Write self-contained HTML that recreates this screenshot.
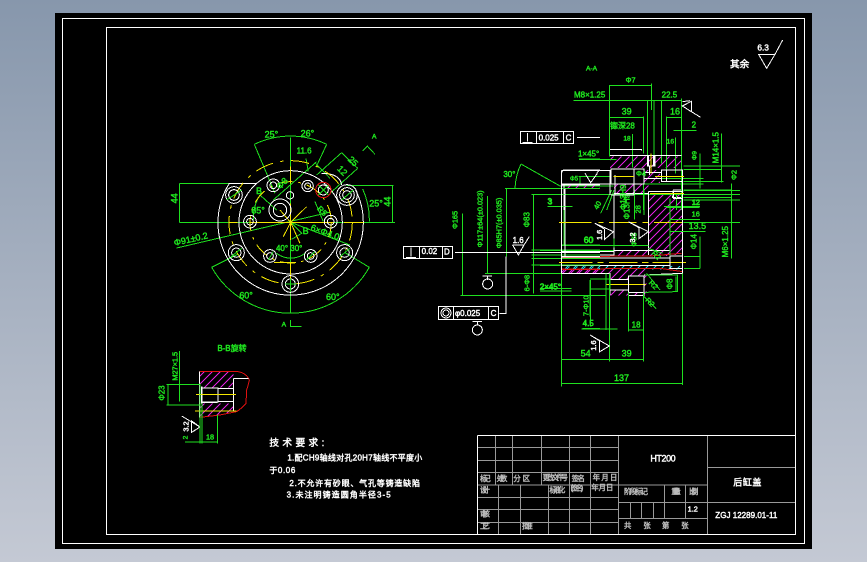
<!DOCTYPE html>
<html><head><meta charset="utf-8"><style>
html,body{margin:0;padding:0;width:867px;height:562px;overflow:hidden;background:linear-gradient(#8797ac,#c4c9d4)}
svg{position:absolute;left:0;top:0;shape-rendering:crispEdges}
text{font-family:"Liberation Sans","WenQuanYi Zen Hei","Noto Sans CJK SC",sans-serif;stroke-width:1.3}
.g{fill:#1fe81f;stroke:#1fe81f;font-size:27px}
.w{fill:#fff;stroke:#fff;font-size:27px}
.a{fill:#bbb;stroke:#bbb;font-size:22px}
.lg{fill:none;stroke:#1fe01f;stroke-width:3}
.lw{fill:none;stroke:#fff;stroke-width:3}
.ly{fill:none;stroke:#f5e800;stroke-width:3}
.lr{fill:none;stroke:#e01010;stroke-width:3}
.la{fill:none;stroke:#999;stroke-width:3}
</style></head><body>
<svg width="867" height="562" viewBox="0 0 867 562">
<defs>
<pattern id="h" width="24" height="24" patternUnits="userSpaceOnUse"><path d="M-6 6L6 -6M0 24L24 0M18 30L30 18" stroke="#e020e0" stroke-width="3"/></pattern>
<pattern id="c" width="24" height="24" patternUnits="userSpaceOnUse"><path d="M0 24L24 0" stroke="#20d0e0" stroke-width="3"/></pattern>
</defs>
<rect x="55" y="13" width="757" height="536" fill="#000"/>
<g fill="none" stroke="#fff"><rect x="62.5" y="18.5" width="742" height="525"/><rect x="106.5" y="27.5" width="689" height="507"/></g>

<!-- roughness top right -->
<g transform="translate(720,30) scale(.3333)">
<path class="lw" d="M114 73H165M117 75L140 115L165 73M165 73L188 30"/>
<text class="w" x="112" y="62" style="font-size:25px">6.3</text>
<text class="w" x="30" y="112" style="font-size:29px">其余</text>
</g>

<!-- left view -->
<g transform="translate(160,110) scale(.3333)">
<path class="lg" d="M392 82V610M283 103A250 250 0 0 1 500 103M283 103L345 250M500 103L468 172M155 472A272 272 0 0 0 628 472M155 472L235 432M628 472L555 428M560 226H700M392 337H705M698 226V337M58 220H205M58 337H392M58 220V337M608 237A220 220 0 0 1 628 335M50 414L512 306M392 337L570 405M545 128L593 175M465 158L510 205M545 128L470 195M593 175L510 250M470 155L340 270M438 145L445 185M608 122L622 108L645 133M392 630V650H425M300 255L350 300M465 275L490 335M300 255A130 130 0 0 0 280 330M350 430A70 70 0 0 0 435 430M392 337L425 370L395 388"/>
<circle class="lw" cx="392" cy="337" r="155"/>
<path class="lw" d="M205 220H290M207 222A218 218 0 1 0 587 240M485 190Q540 190 545 225"/>
<g class="ly">
<path d="M205 337H232M552 337H610M342 458H408M392 337H520M270 337H392M392 170V220M392 280V390M392 458V505"/>
<circle cx="392" cy="337" r="185" stroke-dasharray="55 22 10 22"/>
<circle cx="392" cy="337" r="122" stroke-dasharray="45 18 8 18"/>
<path d="M392 337L360 300M392 337L370 380M392 337L420 400M392 337L440 290"/>
</g>
<g class="lw">
<circle cx="222" cy="255" r="25"/><circle cx="222" cy="255" r="16"/>
<circle cx="561" cy="255" r="31"/><circle cx="561" cy="255" r="22"/><circle cx="561" cy="255" r="13"/>
<circle cx="229" cy="428" r="24"/><circle cx="229" cy="428" r="14"/>
<circle cx="554" cy="428" r="24"/><circle cx="554" cy="428" r="14"/>
<circle cx="391" cy="522" r="25"/><circle cx="391" cy="522" r="15"/>
<circle cx="270" cy="335" r="19"/><circle cx="270" cy="335" r="10"/>
<circle cx="330" cy="438" r="19"/><circle cx="330" cy="438" r="10"/>
<circle cx="452" cy="438" r="19"/><circle cx="452" cy="438" r="10"/>
<circle cx="512" cy="335" r="19"/><circle cx="512" cy="335" r="10"/>
<circle cx="443" cy="228" r="17"/><circle cx="443" cy="228" r="9"/>
<circle cx="340" cy="226" r="19"/><circle cx="340" cy="226" r="10"/>
<circle cx="360" cy="300" r="33"/><circle cx="360" cy="300" r="20"/>
<circle cx="390" cy="256" r="11"/><circle cx="490" cy="240" r="15"/>
</g>
<circle class="lr" cx="490" cy="240" r="23"/>
<path class="lg" d="M475 255L505 225M475 225L505 255M200 270L245 240M545 270L580 240M213 440L245 415M540 440L570 415M375 522H410M391 505V540M325 450L340 425M440 450L465 425"/>
<g class="g">
<text x="314" y="82">25°</text><text x="422" y="80">26°</text><text x="636" y="86" style="font-size:20px">A</text>
<text x="410" y="130" style="font-size:24px">11.6</text><text x="288" y="252">B</text><text x="274" y="310">85°</text>
<text x="470" y="298" transform="rotate(45 470 298)" style="font-size:24px">R5</text><text x="428" y="372">B</text>
<text x="628" y="290">25°</text><text x="348" y="423" style="font-size:24px">40° 30°</text>
<text x="238" y="565">60°</text><text x="498" y="570">60°</text><text x="365" y="650" style="font-size:20px">A</text>
<text x="44" y="408" transform="rotate(-13 44 408)">Φ91±0.2</text>
<text x="450" y="360" transform="rotate(20 450 360)">6×Φ4.0</text>
<text x="52" y="280" transform="rotate(-90 52 280)">44</text>
<text x="692" y="290" transform="rotate(-90 692 290)">44</text>
<text x="530" y="178" transform="rotate(45 530 178)">12</text>
<text x="562" y="150" transform="rotate(45 562 150)">25</text>
<text x="360" y="240" transform="rotate(-45 360 240)">Φ8</text>
</g>
</g>

<!-- section view -->
<g transform="translate(540,190) scale(.3333)">
<rect x="210" y="-100" width="216" height="34" fill="url(#h)"/>
<rect x="285" y="-60" width="75" height="39" fill="url(#h)"/>
<rect x="222" y="-21" width="103" height="31" fill="url(#h)"/>
<rect x="325" y="10" width="103" height="185" fill="url(#h)"/>
<rect x="225" y="182" width="165" height="16" fill="url(#h)"/>
<rect x="65" y="228" width="360" height="10" fill="url(#c)"/>
<rect x="65" y="238" width="145" height="12" fill="url(#h)"/>
<rect x="210" y="238" width="110" height="78" fill="url(#h)"/>
<path class="lr" d="M65 203H130L225 198H330L425 190M65 237H160L260 235H360L428 245"/>
<path class="ly" d="M57 97H155M175 97H190M207 97H290M308 97H326M342 97H428M57 217H158M172 217H190M207 217H292M306 217H325M338 217H438M200 283H318"/>
<rect x="265" y="258" width="47" height="50" fill="#000"/>
<rect x="210" y="268" width="55" height="32" fill="#000"/>
<path class="ly" d="M200 283H318"/>
<path class="lw" d="M65 0V250M75 0V195M222 10V190M222 10H325M325 10V195M428 0V250M65 195H222V190M65 185H220M65 204H390M65 227H390M65 250H210V315M210 268H265M210 300H265M265 258H312V308H265ZM265 308V316H312V308M390 198H428V235H390ZM400 0H428V22H398ZM325 5H428M222 182H390M312 255L428 250"/>
<path class="lg" d="M-20 13H600M0 181H220M0 195H60M0 205H60M0 227H60M0 250H60M0 295H95M0 316H200M65 0V590M25 49H98M72 50V165M65 167H325M222 145V172M182 70L215 0M283 0V88M312 0V75M390 25V195M372 50H480M390 88H480M390 124H497M432 200H480M432 235H480M480 140V235M575 0V205M430 22H575M430 0H575M430 97H600M320 250L360 300M315 255H412V305L315 307M408 260V305M310 318L348 356M150 267H210V297H150M150 270V380M198 250V420M125 417H233M265 308V425M265 420H310M310 308V515M208 250V515M65 508H310M428 250V585M65 580H428M325 175L368 190"/>
<path class="lw" d="M165 100L220 125L193 149V117M165 100L193 117M150 435L208 468L178 486V452M150 435L178 452M265 95L325 125L297 146V113M265 95L297 113"/>
<g class="g">
<text x="22" y="42" style="font-size:24px">3</text><text x="131" y="159">60</text><text x="262" y="158" style="font-size:22px" transform="rotate(-90 282 150)">Φ38</text>
<text x="173" y="60" transform="rotate(-60 173 60)" style="font-size:22px">40</text>
<text x="268" y="88" transform="rotate(-90 268 88)" style="font-size:24px">Φ13H9</text>
<text x="302" y="70" transform="rotate(-90 302 70)" style="font-size:22px">28</text>
<text x="455" y="45" style="font-size:22px">12</text><text x="455" y="80" style="font-size:22px">16</text>
<text x="446" y="117">13.5</text><text x="470" y="178" transform="rotate(-90 470 178)" style="font-size:24px">Φ14</text>
<text x="564" y="202" transform="rotate(-90 564 202)" style="font-size:24px">M6×1.25</text>
<text x="345" y="196" transform="rotate(45 345 180)" style="font-size:22px">R2</text>
<text x="335" y="284" transform="rotate(45 335 270)" style="font-size:22px">R2</text>
<text x="322" y="335" transform="rotate(45 322 325)" style="font-size:22px">R2</text>
<text x="398" y="298" transform="rotate(-90 398 298)" style="font-size:24px">Φ8</text>
<text x="-1" y="298" style="font-size:24px">2×45°</text>
<text x="146" y="378" transform="rotate(-90 146 378)" style="font-size:22px">7-Φ10</text>
<text x="128" y="408" style="font-size:24px">4.5</text><text x="275" y="412" style="font-size:24px">18</text>
<text x="122" y="500">54</text><text x="245" y="500">39</text><text x="222" y="573">137</text>
</g>
<g class="w" style="font-size:22px">
<text x="186" y="150" transform="rotate(-90 186 150)" style="font-size:22px">1.6</text>
<text x="285" y="158" transform="rotate(-90 285 158)" style="font-size:22px">3.2</text>
<text x="168" y="482" transform="rotate(-90 168 482)" style="font-size:22px">1.6</text>
</g>
</g>

<g transform="translate(560,60) scale(.3333)">
<path class="lg" d="M148 75V290M275 70V150M148 76H275M40 121H365M262 120V310M282 120V310M305 120V310M365 115V450M148 172H250M250 170V280M320 170V345M318 172H365M340 211H410M57 298H170M217 222V322M347 232V340M370 318H540M370 328H485M370 365H490M250 355H430M250 372H430M0 378H160M0 403H160M420 280V385M484 220V368M515 370V450M250 370V450M162 390L140 450M60 350V372H150M55 350H150M370 392H540M370 420H540M270 395H370M320 442H418M350 405V450"/>
<rect x="153" y="327" width="99" height="45" fill="#000"/>
<path class="lw" d="M150 268H245V272M150 287H365M153 327H252V372H153ZM222 327V405M153 405H222M262 287H285V318H262ZM268 318V345M305 330H368V365H305ZM320 330V365M252 338H305M252 355H305M165 345V405M340 395H368V415H340ZM368 365V450M265 395H340M265 395V450M5 332H150V372M5 332V372H150M5 372H150M12 372V450M367 125L390 122M367 138L394 124V155ZM394 155L422 172M150 372V405"/>
<path d="M262 287h5v30h-5zM279 287h5v30h-5z" fill="#fff"/>
<path class="ly" d="M273 280V340M160 349H222M285 349H372M270 401H372"/>
<path class="lw" d="M75 340L92 368L112 340M110 340L118 330"/>
<g class="g">
<text x="78" y="32" style="font-size:20px">A-A</text><text x="197" y="68" style="font-size:22px">Φ7</text>
<text x="42" y="113" style="font-size:24px">M8×1.25</text><text x="305" y="113" style="font-size:24px">22.5</text>
<text x="185" y="164">39</text><text x="330" y="164">16</text><text x="395" y="203" style="font-size:24px">2</text>
<text x="150" y="205" style="font-size:24px">锪深28</text><text x="54" y="290" style="font-size:24px">1×45°</text>
<text x="190" y="242" style="font-size:20px">18</text><text x="320" y="250" style="font-size:20px">16</text>
<text x="410" y="300" transform="rotate(-90 410 300)" style="font-size:20px">Φ9</text>
<text x="475" y="310" transform="rotate(-90 475 310)" style="font-size:24px">M14×1.5</text>
<text x="228" y="348" style="font-size:22px">Φ4</text><text x="30" y="362" style="font-size:18px">Φ5</text>
<text x="530" y="360" transform="rotate(-90 530 360)" style="font-size:22px">Φ2</text>
<text x="396" y="434" style="font-size:22px">12</text>
<text x="198" y="450" transform="rotate(-90 198 450)" style="font-size:24px">Φ13H9</text>
</g>
</g>

<g transform="translate(400,60) scale(.3333)">
<rect x="485" y="375" width="115" height="10" fill="url(#h)"/>
<rect x="485" y="620" width="115" height="8" fill="url(#c)"/>
<rect x="485" y="628" width="115" height="12" fill="url(#h)"/>
<path class="lr" d="M485 590H600M485 628H600"/>
<path class="lg" d="M315 385H600M395 403H600M320 385V590M263 408V640M255 640H600M187 460V706M182 706H600M400 403V700M395 570H600M395 585H600M395 595H600M395 615H600M485 640V870M345 385Q347 345 363 312M363 312L480 378M520 121H600M537 297H600M443 439H518M420 693H515M485 555H600M572 660V800M548 805H600"/>
<path class="lw" d="M165 577H600M531 232H600M318 590V760H298M485 340Q485 330 495 330H600M485 340V640M495 385V590M485 375H600M485 590H600M485 640H600M361 214H521V250H361ZM410 214V250M491 214V250M10 559H158V596H10ZM58 559V596M127 559V596M115 739H295V778H115ZM160 739V778M265 739V778M248 648H276M262 648V660M218 785H246M232 785V797M383 219V245M368 247H398M33 563V590M18 592H48M338 555L355 585L372 555M372 555L388 530M338 555H372"/>
<circle class="lw" cx="263" cy="672" r="15"/><circle class="lw" cx="232" cy="810" r="15"/>
<circle class="lw" cx="138" cy="759" r="15"/><circle class="lw" cx="138" cy="759" r="9"/>
<path class="ly" d="M477 487H575M477 607H575"/>
<g class="g">
<text x="444" y="433" style="font-size:24px">3</text><text x="552" y="549" style="font-size:24px">60</text>
<text x="310" y="351" style="font-size:24px">30°</text><text x="420" y="688" style="font-size:24px">2×45°</text>
<text x="173" y="507" transform="rotate(-90 173 507)" style="font-size:22px">Φ165</text>
<text x="248" y="562" transform="rotate(-90 248 562)" style="font-size:22px">Φ117±64(±0.023)</text>
<text x="304" y="565" transform="rotate(-90 304 565)" style="font-size:22px">Φ85H7(±0.035)</text>
<text x="388" y="502" transform="rotate(-90 388 502)" style="font-size:24px">Φ83</text>
<text x="388" y="694" transform="rotate(-90 388 694)" style="font-size:22px">6-Φ8</text>
<text x="548" y="798" style="font-size:24px">4.5</text>
</g>
<g class="w">
<text x="338" y="549" style="font-size:24px">1.6</text><text x="416" y="242" style="font-size:24px">0.025</text><text x="497" y="242" style="font-size:24px">C</text>
<text x="65" y="582" style="font-size:24px">0.02</text><text x="132" y="583" style="font-size:24px">D</text>
<text x="165" y="768" style="font-size:24px">φ0.025</text><text x="272" y="768" style="font-size:24px">C</text>
</g>
</g>

<!-- B-B section -->
<g transform="translate(140,340) scale(.3333)">
<rect x="180" y="95" width="100" height="48" fill="url(#h)"/>
<rect x="180" y="190" width="100" height="42" fill="url(#h)"/>
<path d="M240 225L180 233V240H280V215Z" fill="#000"/>
<path class="lr" d="M178 95H295Q320 100 328 120Q325 135 320 150L318 190Q305 205 290 215L240 225L180 232"/>
<path class="lw" d="M178 95V232M233 145H280M233 184H280M280 115V215M280 115H325M125 228L180 261L155 277V243L180 261"/>
<path d="M183 140h4v50h-4zM232 143h3v44h-3zM184 142h49v4h-49zM184 185h49v4h-49z" fill="#fff"/>
<path class="ly" d="M168 163H288M165 213H290"/>
<path class="lg" d="M118 33V185M80 133H180M80 195H180M84 133V195M180 130V310M186 190V310M233 225V310M135 306H233"/>
<g class="g">
<text x="232" y="33" style="font-size:24px">B-B旋转</text>
<text x="112" y="122" transform="rotate(-90 112 122)" style="font-size:22px">M27×1.5</text>
<text x="74" y="182" transform="rotate(-90 74 182)" style="font-size:24px">Φ23</text>
<text x="143" y="298" transform="rotate(-90 143 298)" style="font-size:20px">2</text>
<text x="198" y="298" style="font-size:22px">18</text>
</g>
<text class="w" x="146" y="275" transform="rotate(-90 146 275)" style="font-size:22px">3.2</text>
<text class="w" x="388" y="318" textLength="165" style="font-size:29px">技术要求:</text>
<text class="w" x="442" y="361" textLength="405" style="font-size:24px">1.配CH9轴线对孔20H7轴线不平度小</text>
<text class="w" x="388" y="399" textLength="78" style="font-size:24px">于0.06</text>
<text class="w" x="448" y="438" textLength="392" style="font-size:24px">2.不允许有砂眼、气孔等铸造缺陷</text>
<text class="w" x="440" y="473" textLength="312" style="font-size:24px">3.未注明铸造圆角半径3-5</text>
</g>

<!-- title block -->
<g transform="translate(470,430) scale(.3333)">
<path class="la" d="M22 52H445M22 91H445M22 127H445M22 165H445M22 202H445M22 238H445M22 277H445M76 16V165M127 16V165M214 16V165M298 16V165M361 16V165M86 165V312M151 165V312M235 165V312M298 165V312M361 165V312M445 16V312M712 16V312M445 165H712M445 217H975M445 265H712M583 165V265M647 165V265M482 217V265M515 217V265M551 217V265M712 112H975"/>
<path class="lw" d="M22 16H976M22 16V312"/>
<text class="w" x="541" y="95" textLength="76" style="font-size:27px">HT200</text>
<text class="w" x="790" y="167" textLength="84" style="font-size:27px">后缸盖</text>
<text class="w" x="736" y="264" textLength="186" style="font-size:24px">ZGJ 12289.01-11</text>
<text class="w" x="653" y="245" style="font-size:22px">1.2</text>
<g class="a">
<text x="30" y="153" textLength="32">标记</text><text x="80" y="153" textLength="32">处数</text><text x="130" y="153" textLength="50">分 区</text>
<text x="218" y="150" textLength="76">更改文件号</text><text x="305" y="153" textLength="40">签名</text><text x="368" y="150" textLength="74">年月日</text>
<text x="30" y="188" textLength="30">设计</text><text x="238" y="188" textLength="48">标准化</text><text x="302" y="182" textLength="38">(签名)</text><text x="364" y="180" textLength="66">年月日</text>
<text x="30" y="259" textLength="30">审核</text><text x="30" y="296" textLength="30">工艺</text><text x="156" y="296" textLength="32">批准</text>
<text x="462" y="192" textLength="72">阶段标记</text><text x="604" y="192" textLength="28">重量</text><text x="657" y="192" textLength="28">比例</text>
<text x="462" y="294">共</text><text x="520" y="294">张</text><text x="576" y="294">第</text><text x="634" y="294">张</text>
</g>
</g>
</svg>
</body></html>
